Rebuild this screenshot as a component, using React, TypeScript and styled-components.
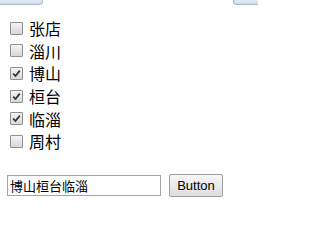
import React, { useState } from 'react';
import styled, { createGlobalStyle } from 'styled-components';

const GlobalStyle = createGlobalStyle`
    html, body {
        margin: 0;
        padding: 0;
        background: #ffffff;
    }
    body {
        font-family: "Liberation Sans", "Noto Sans CJK SC", sans-serif;
        color: #000;
    }
`;

const Page = styled.div`
    width: 258px;
    height: 214px;
    display: flex;
    flex-direction: column;
    overflow: hidden;
`;

const TabStrip = styled.div`
    height: 5px;
    display: flex;
    justify-content: space-between;
`;

const TabEdge = styled.div<{ $side: 'left' | 'right' }>`
    width: ${(p) => (p.$side === 'left' ? '42px' : '24px')};
    height: 4px;
    background: linear-gradient(#e4eaf4, #d2dcec);
    border-bottom: 1px solid #a9b7cf;
    ${(p) =>
        p.$side === 'left'
            ? 'border-right: 1px solid #a9b7cf; border-bottom-right-radius: 4px;'
            : 'border-left: 1px solid #a9b7cf; border-bottom-left-radius: 4px;'}
`;

const CheckList = styled.div`
    display: flex;
    flex-direction: column;
    padding: 12px 0 0 10px;
`;

const Row = styled.label`
    display: flex;
    align-items: center;
    gap: 6px;
    height: 22.6px;
    font-size: 16px;
    font-family: "Noto Sans CJK SC", sans-serif;
    line-height: 1;
`;

const Box = styled.span<{ $checked: boolean }>`
    width: 11px;
    height: 11px;
    border: 1px solid #8f8f8f;
    border-radius: 1px;
    background: linear-gradient(#f4f4f4, #d8d8d8);
    display: flex;
    align-items: center;
    justify-content: center;
    flex: none;
`;

const HiddenInput = styled.input`
    display: none;
`;

const Form = styled.div`
    display: flex;
    align-items: center;
    gap: 8px;
    padding: 21px 0 0 7px;
`;

const TextField = styled.input`
    width: 148px;
    height: 19px;
    padding: 0 2px;
    border: 1px solid #a5a5a5;
    font-size: 13px;
    font-family: "Noto Sans CJK SC", sans-serif;
    outline: none;
    box-sizing: content-box;
`;

const Button = styled.button`
    width: 54px;
    height: 23px;
    padding: 0;
    border: 1px solid #9d9d9d;
    border-radius: 2px;
    background: linear-gradient(#f6f6f6, #dedede);
    font-size: 13px;
    font-family: "Liberation Sans", sans-serif;
    color: #000;
`;

const places = ['张店', '淄川', '博山', '桓台', '临淄', '周村'];

const App = () => {
    const [checked, setChecked] = useState<Array<string>>(['博山', '桓台', '临淄']);

    const toggle = (name: string) => {
        setChecked((prev) =>
            prev.includes(name) ? prev.filter((n) => n !== name) : [...prev, name]
        );
    };

    const value = places.filter((p) => checked.includes(p)).join('');

    return (
        <Page>
            <GlobalStyle />
            <TabStrip>
                <TabEdge $side="left" />
                <TabEdge $side="right" />
            </TabStrip>
            <CheckList>
                {places.map((name) => {
                    const on = checked.includes(name);
                    return (
                        <Row key={name}>
                            <HiddenInput type="checkbox" checked={on} onChange={() => toggle(name)} />
                            <Box $checked={on}>
                                {on && (
                                    <svg width="9" height="9" viewBox="0 0 9 9">
                                        <path d="M1.2 4.6 L3.5 7 L7.8 1.6" fill="none" stroke="#333" strokeWidth="1.8" />
                                    </svg>
                                )}
                            </Box>
                            {name}
                        </Row>
                    );
                })}
            </CheckList>
            <Form>
                <TextField value={value} readOnly />
                <Button>Button</Button>
            </Form>
        </Page>
    );
};

export default App;
